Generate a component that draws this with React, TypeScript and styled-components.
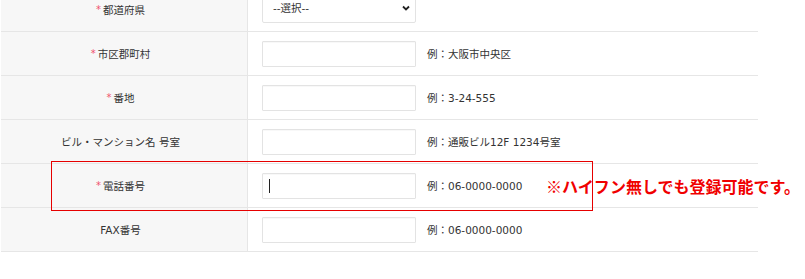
import React from "react";
import styled, { createGlobalStyle } from "styled-components";

const Global = createGlobalStyle`
  html, body { margin: 0; padding: 0; background: #fff; overflow: hidden; }
  body { font-family: "DejaVu Sans", "Noto Sans CJK JP", sans-serif; color: #333; }
`;

const Page = styled.div`
  padding-left: 1px;
  margin-top: -12px;
`;

const Table = styled.div`
  width: 757px;
  display: flex;
  flex-direction: column;
`;

const Row = styled.div`
  position: relative;
  display: grid;
  grid-template-columns: 247px 1fr;
  height: 44px;
  border-bottom: 1px solid #e6e6e6;
  box-sizing: border-box;
`;

const Label = styled.div`
  background: #f7f7f7;
  border-right: 1px solid #e6e6e6;
  display: flex;
  align-items: center;
  justify-content: center;
  padding-right: 7px;
  font-size: 10.5px;
  color: #333;
  letter-spacing: 0;
`;

const Req = styled.span`
  color: #f0506e;
  font-size: 10px;
  margin-right: 2px;
`;

const Cell = styled.div`
  display: flex;
  align-items: center;
  padding-left: 14px;
  gap: 11px;
`;

const FieldWrap = styled.div<{ $focused?: boolean }>`
  position: relative;
  width: 154px;
  height: 26px;
  &::after {
    content: "";
    display: ${(p) => (p.$focused ? "block" : "none")};
    position: absolute;
    left: 7px;
    top: 6px;
    width: 1px;
    height: 14px;
    background: #222;
  }
`;

const Input = styled.input`
  box-sizing: border-box;
  width: 100%;
  height: 100%;
  border: 1px solid #e3e3e3;
  border-radius: 1px;
  background: #fff;
  box-shadow: inset 0 1px 1px rgba(0, 0, 0, 0.03);
  outline: none;
  padding: 0 6px;
  font: inherit;
`;

const SelectWrap = styled.div`
  position: relative;
  width: 154px;
  height: 30px;
  margin-top: -4px;
`;

const Select = styled.select`
  box-sizing: border-box;
  width: 100%;
  height: 100%;
  appearance: none;
  border: 1px solid #e3e3e3;
  border-radius: 2px;
  background: #fff;
  font-family: "DejaVu Sans", "Noto Sans CJK JP", sans-serif;
  font-size: 10.5px;
  color: #333;
  padding: 0 10px;
  outline: none;
`;

const Chevron = styled.svg`
  position: absolute;
  right: 6px;
  top: 12px;
  pointer-events: none;
`;

const Example = styled.span`
  font-size: 10.5px;
  color: #333;
  white-space: nowrap;
`;

const Highlight = styled.div`
  position: absolute;
  z-index: 2;
  left: 50px;
  top: -3px;
  width: 542px;
  height: 50px;
  box-sizing: border-box;
  border: 1px solid #e60000;
  pointer-events: none;
`;

const Note = styled.div`
  position: absolute;
  z-index: 3;
  left: 545px;
  top: 0;
  bottom: 0;
  display: flex;
  align-items: center;
  font-family: "Noto Sans CJK JP", sans-serif;
  font-weight: 700;
  font-size: 16px;
  color: #f00000;
  white-space: nowrap;
  padding-top: 1px;
`;

type RowDef = {
  label: string;
  required?: boolean;
  example?: string;
  select?: boolean;
  focused?: boolean;
  note?: boolean;
};

const rows: RowDef[] = [
  { label: "都道府県", required: true, select: true },
  { label: "市区郡町村", required: true, example: "例：大阪市中央区" },
  { label: "番地", required: true, example: "例：3-24-555" },
  { label: "ビル・マンション名 号室", example: "例：通販ビル12F 1234号室" },
  { label: "電話番号", required: true, example: "例：06-0000-0000", focused: true, note: true },
  { label: "FAX番号", example: "例：06-0000-0000" },
];

export default function App() {
  return (
    <>
      <Global />
      <Page>
        <Table>
          {rows.map((r) => (
            <Row key={r.label}>
              <Label>
                {r.required && <Req>*</Req>}
                {r.label}
              </Label>
              <Cell>
                {r.select ? (
                  <SelectWrap>
                    <Select defaultValue="">
                      <option value="">--選択--</option>
                    </Select>
                    <Chevron width="8" height="6" viewBox="0 0 8 6">
                      <path d="M1 1.5 L4 4.5 L7 1.5" fill="none" stroke="#222" strokeWidth="1.8" />
                    </Chevron>
                  </SelectWrap>
                ) : (
                  <FieldWrap $focused={r.focused}>
                    <Input type="text" />
                  </FieldWrap>
                )}
                {r.example && <Example>{r.example}</Example>}
              </Cell>
              {r.note && (
                <>
                  <Highlight />
                  <Note>※ハイフン無しでも登録可能です。</Note>
                </>
              )}
            </Row>
          ))}
        </Table>
      </Page>
    </>
  );
}
